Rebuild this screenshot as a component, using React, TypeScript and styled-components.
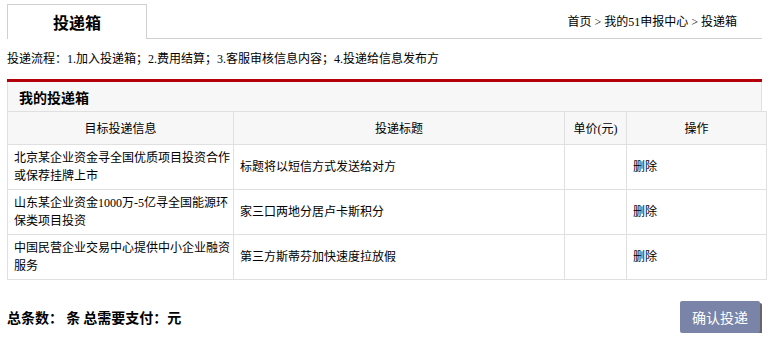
import React from "react";
import styled, { createGlobalStyle } from "styled-components";

const Global = createGlobalStyle`
  html, body { margin: 0; padding: 0; background: #fff; }
  body { font-family: "Liberation Serif", "Noto Sans CJK SC", serif; font-size: 12px; color: #000; }
`;

const Page = styled.div`
  width: 755px;
  margin-left: 7px;
  padding-top: 4px;
`;

const TabBar = styled.div`
  display: flex;
  align-items: flex-end;
  height: 34px;
  border-bottom: 1px solid #d0d0d0;
`;

const Tab = styled.div`
  width: 138px;
  height: 34px;
  margin-bottom: -1px;
  border: 1px solid #d0d0d0;
  border-bottom: none;
  background: #fff;
  display: flex;
  align-items: center;
  justify-content: center;
  font-family: "Noto Sans CJK SC", sans-serif;
  font-size: 16px;
  font-weight: bold;
`;

const Crumbs = styled.div`
  margin-left: auto;
  align-self: center;
  padding-right: 25px;
  font-size: 12px;
`;

const Flow = styled.div`
  height: 40px;
  display: flex;
  align-items: center;
  padding-bottom: 2px;
  box-sizing: border-box;
`;

const Box = styled.div`
  border-top: 3px solid #b3000a;
`;

const BoxTitle = styled.div`
  height: 29px;
  display: flex;
  align-items: center;
  padding-left: 11px;
  background: #f7f7f7;
  border-left: 1px solid #e0e0e0;
  border-right: 1px solid #e0e0e0;
  font-family: "Noto Sans CJK SC", sans-serif;
  font-size: 14px;
  font-weight: bold;
`;

const Table = styled.table`
  width: 755px;
  border-collapse: collapse;
  table-layout: fixed;
`;

const Th = styled.th<{ $w: number }>`
  width: ${(p) => p.$w}px;
  height: 32px;
  padding: 0;
  background: #f7f7f7;
  border: 1px solid #e0e0e0;
  font-weight: normal;
  text-align: center;
  font-size: 12px;
`;

const Td = styled.td`
  height: 44px;
  padding: 0 0 0 6px;
  border: 1px solid #e0e0e0;
  line-height: 18px;
  vertical-align: middle;
  font-size: 12px;
`;

const Footer = styled.div`
  display: flex;
  align-items: center;
  justify-content: space-between;
  margin-top: 21px;
`;

const Total = styled.div`
  font-family: "Noto Sans CJK SC", sans-serif;
  font-size: 14px;
  font-weight: bold;
`;

const Button = styled.button`
  width: 80px;
  height: 32px;
  border: none;
  border-radius: 2px;
  background: #7a84a8;
  color: #fff;
  font-family: "Noto Sans CJK SC", sans-serif;
  font-size: 14px;
  box-shadow: 2px 2px 0 #666;
  margin-right: 2px;
  cursor: pointer;
`;

const rows = [
  { info: "北京某企业资金寻全国优质项目投资合作或保荐挂牌上市", title: "标题将以短信方式发送给对方" },
  { info: "山东某企业资金1000万-5亿寻全国能源环保类项目投资", title: "家三口两地分居卢卡斯积分" },
  { info: "中国民营企业交易中心提供中小企业融资服务", title: "第三方斯蒂芬加快速度拉放假" },
];

export default function App() {
  return (
    <>
      <Global />
      <Page>
        <TabBar>
          <Tab>投递箱</Tab>
          <Crumbs>首页 &gt; 我的51申报中心 &gt; 投递箱</Crumbs>
        </TabBar>
        <Flow>投递流程：1.加入投递箱；2.费用结算；3.客服审核信息内容；4.投递给信息发布方</Flow>
        <Box>
          <BoxTitle>我的投递箱</BoxTitle>
          <Table>
            <thead>
              <tr>
                <Th $w={225}>目标投递信息</Th>
                <Th $w={330}>投递标题</Th>
                <Th $w={61}>单价(元)</Th>
                <Th $w={139}>操作</Th>
              </tr>
            </thead>
            <tbody>
              {rows.map((r, i) => (
                <tr key={i}>
                  <Td>{r.info}</Td>
                  <Td>{r.title}</Td>
                  <Td></Td>
                  <Td>删除</Td>
                </tr>
              ))}
            </tbody>
          </Table>
        </Box>
        <Footer>
          <Total>总条数： 条 总需要支付：元</Total>
          <Button>确认投递</Button>
        </Footer>
      </Page>
    </>
  );
}
